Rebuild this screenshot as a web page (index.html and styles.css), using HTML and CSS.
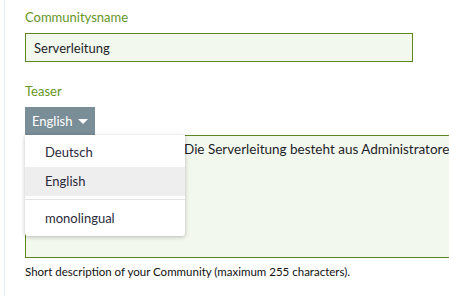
FILE: index.html
```html
<!DOCTYPE html>
<html lang="de">
<head>
    <meta charset="UTF-8">
    <title>Community bearbeiten</title>
    <link rel="stylesheet" href="styles.css">
</head>
<body>
<div class="page">
    <div class="field">
        <label class="field-label" for="name">Communitysname</label>
        <input class="field-input" id="name" type="text" value="Serverleitung">
    </div>
    <div class="field">
        <label class="field-label" for="teaser">Teaser</label>
        <div class="lang-switch">
            <button class="lang-button" type="button">English <span class="caret"></span></button>
            <ul class="lang-menu">
                <li>Deutsch</li>
                <li class="active">English</li>
                <li class="divider"></li>
                <li>monolingual</li>
            </ul>
        </div>
        <div class="field-textarea" id="teaser">Die Serverleitung besteht aus Administratoren</div>
        <p class="field-help">Short description of your Community (maximum 255 characters).</p>
    </div>
</div>
</body>
</html>
```

FILE: styles.css
```css
/* Grundstile */
*, *::before, *::after {
    box-sizing: border-box;
    margin: 0;
    padding: 0;
}
body {
    font-family: 'Lato', sans-serif;
    background: #fff;
    overflow: hidden;
}
.page {
    margin-left: 4px;
    border-left: 1px solid #e6edf4;
    padding: 8px 0 20px 20px;
    height: 296px;
}
.field {
    display: flex;
    flex-direction: column;
    align-items: flex-start;
    margin-bottom: 20px;
}
.field-label {
    color: #65951f;
    font-size: 13px;
    line-height: 18px;
    margin-bottom: 7px;
}
.field-input {
    width: 388px;
    height: 29px;
    border: 1px solid #5a8a1e;
    background: #f3f8ee;
    color: #1e1e2a;
    font-family: inherit;
    font-size: 13px;
    padding: 0 8px;
    outline: none;
}
.lang-switch {
    position: relative;
}
.lang-button {
    display: flex;
    align-items: center;
    gap: 6px;
    height: 28px;
    padding: 0 7px;
    border: none;
    background: #7a8e98;
    color: #fff;
    font-family: inherit;
    font-size: 13px;
    cursor: pointer;
}
.caret {
    width: 0;
    height: 0;
    border-left: 5px solid transparent;
    border-right: 5px solid transparent;
    border-top: 5px solid #fff;
}
.lang-menu {
    position: absolute;
    top: 100%;
    left: 0;
    width: 160px;
    list-style: none;
    background: #fff;
    border-radius: 0 0 3px 3px;
    box-shadow: 0 1px 4px rgba(0,0,0,0.25);
    padding: 3px 0;
    z-index: 2;
}
.lang-menu li {
    height: 29px;
    line-height: 29px;
    padding-left: 20px;
    font-size: 13px;
    color: #2a2a3c;
}
.lang-menu li.active {
    background: #eeeeee;
}
.lang-menu li.divider {
    height: 1px;
    margin: 3px 0 4px;
    background: #e5e5e5;
}
/* Textfeld reicht über den rechten Rand hinaus */
.field-textarea {
    width: 600px;
    height: 123px;
    border: 1px solid #5a8a1e;
    background: #f3f8ee;
    color: #1e1e2a;
    font-size: 13.5px;
    line-height: 18px;
    padding: 4px 8px 4px 158px;
    white-space: nowrap;
    overflow: hidden;
}
.field-help {
    font-size: 11.5px;
    margin-top: 7px;
    color: #111;
}
```
